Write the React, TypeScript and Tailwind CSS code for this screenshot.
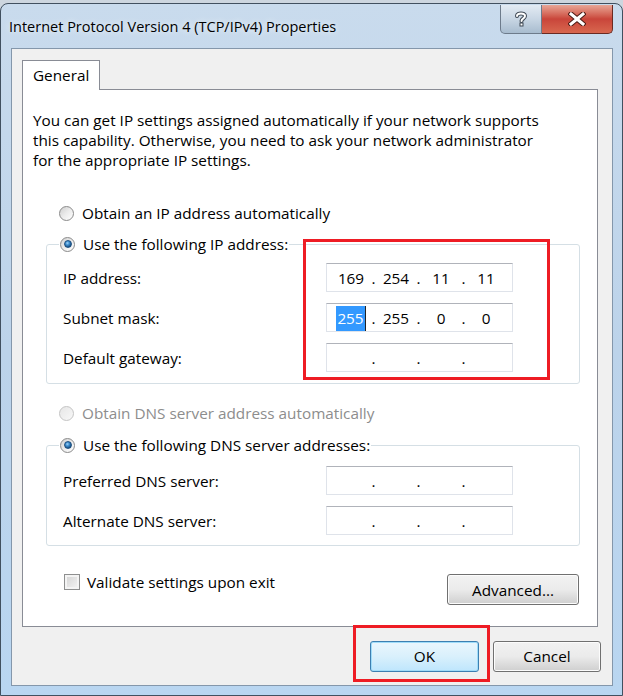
import React from "react";

function Radio({ checked, disabled }: { checked?: boolean; disabled?: boolean }) {
  return (
    <span
      className={
        "flex h-[15px] w-[15px] shrink-0 items-center justify-center rounded-full border " +
        (disabled
          ? "border-[#c4c4c4] bg-gradient-to-br from-[#e6e6e6] to-[#f8f8f8]"
          : "border-[#8a8a8a] bg-gradient-to-br from-[#cfcfcf] via-[#ececec] to-[#ffffff]")
      }
    >
      {checked && (
        <span className="h-[8px] w-[8px] rounded-full border border-[#1d4f80] bg-[radial-gradient(circle_at_40%_35%,#9fd3f7_0%,#3f8fd0_35%,#10406e_85%)]" />
      )}
    </span>
  );
}

function IpBox({ parts, selectFirst }: { parts: string[]; selectFirst?: boolean }) {
  return (
    <div className="flex h-[29px] w-[187px] items-center border border-[#dfe3ea] border-t-[#b0b3ba] bg-white pl-[6px] text-[15.3px] leading-none text-black">
      {[0, 1, 2, 3].map((i) => (
        <React.Fragment key={i}>
          {i > 0 && <span className="w-[9px] pt-[2px] text-center">.</span>}
          <span className="flex w-[36px] justify-center pt-[2px]">
            {selectFirst && i === 0 ? (
              <span className="flex items-stretch">
                <span className="bg-[#3399ff] px-[1px] py-[5px] text-white">{parts[i]}</span>
                <span className="w-[1px] bg-[#222]" />
              </span>
            ) : (
              parts[i]
            )}
          </span>
        </React.Fragment>
      ))}
    </div>
  );
}

function Row({ label, parts, selectFirst }: { label: string; parts: string[]; selectFirst?: boolean }) {
  return (
    <div className="flex items-center">
      <span className="w-[263px]">{label}</span>
      <IpBox parts={parts} selectFirst={selectFirst} />
    </div>
  );
}

function Button({ children, def, w }: { children: React.ReactNode; def?: boolean; w: string }) {
  return (
    <div
      className={
        "flex h-[31px] items-center justify-center rounded-[3px] border text-[15.3px] text-black " +
        w +
        " " +
        (def
          ? "border-[#3c7fb1] bg-gradient-to-b from-[#eaf6fd] via-[#d9f0fc] to-[#bee6fd] shadow-[inset_0_0_0_1px_#9fdcf9]"
          : "border-[#707070] bg-gradient-to-b from-[#f2f2f2] via-[#ebebeb] to-[#cfcfcf] shadow-[inset_0_0_0_1px_#fcfcfc]")
      }
    >
      {children}
    </div>
  );
}

export default function App() {
  const empty = ["", "", "", ""];
  return (
    <div className="h-[696px] w-[623px] overflow-hidden bg-[#cdd6df] font-['Open_Sans',sans-serif] text-[15.3px] text-black">
      <div className="mt-[3px] flex h-[693px] flex-col rounded-t-[8px] border border-[#41505f] bg-gradient-to-b from-[#c9dbed] via-[#bcd3ea] to-[#b9d6f1]">
        {/* title bar */}
        <div className="flex h-[44px] shrink-0 items-start justify-between">
          <div className="pl-[8px] pt-[13px] text-[14.5px] leading-[20px] text-black [text-shadow:0_0_6px_#ffffff]">
            Internet Protocol Version 4 (TCP/IPv4) Properties
          </div>
          <div className="mr-[9px] mt-[1px] flex h-[29px]">
            <div className="flex w-[42px] items-center justify-center rounded-bl-[5px] border border-t-0 border-[#6d7b8b] bg-gradient-to-b from-[#e3ebf3] via-[#c8d6e4] to-[#a8bccf]">
              <svg width="14" height="16" viewBox="0 0 14 16">
                <path
                  d="M3 5 C3 1.5 11 1.5 11 5 C11 7.5 7.5 7.5 7.5 10"
                  fill="none"
                  stroke="#3c4652"
                  strokeWidth="4"
                  strokeLinecap="round"
                />
                <path
                  d="M3 5 C3 1.5 11 1.5 11 5 C11 7.5 7.5 7.5 7.5 10"
                  fill="none"
                  stroke="#ffffff"
                  strokeWidth="2"
                  strokeLinecap="round"
                />
                <rect x="5.5" y="11.5" width="4" height="4" fill="#3c4652" />
                <rect x="6.5" y="12.5" width="2" height="2" fill="#ffffff" />
              </svg>
            </div>
            <div className="flex w-[71px] items-center justify-center rounded-br-[5px] border border-l-0 border-t-0 border-[#6a2a22] bg-gradient-to-b from-[#e7a596] via-[#c9453a] to-[#d8674f]">
              <svg width="18" height="14" viewBox="0 0 18 14">
                <path d="M3 2 L15 12 M15 2 L3 12" stroke="#4a1a14" strokeWidth="5" strokeLinecap="square" />
                <path d="M3 2 L15 12 M15 2 L3 12" stroke="#ffffff" strokeWidth="3" strokeLinecap="square" />
              </svg>
            </div>
          </div>
        </div>

        {/* client */}
        <div className="relative ml-[10px] mr-[9px] flex h-[638px] shrink-0 flex-col border border-[#8497ab] bg-[#f0f0f0]">
          {/* tab header */}
          <div className="ml-[10px] mt-[11px] flex">
            <div className="relative z-10 -mb-px flex h-[30px] w-[78px] items-center border border-b-0 border-[#898c95] bg-white pl-[10px]">
              General
            </div>
          </div>
          {/* panel */}
          <div className="relative ml-[10px] flex h-[538px] w-[576px] flex-col border border-[#898c95] bg-white leading-[20px]">
            <p className="pl-[10px] pt-[20px]">
              You can get IP settings assigned automatically if your network supports
              <br />
              this capability. Otherwise, you need to ask your network administrator
              <br />
              for the appropriate IP settings.
            </p>

            <div className="ml-[36px] mt-[33px] flex items-center gap-[8px]">
              <Radio />
              <span>Obtain an IP address automatically</span>
            </div>

            <fieldset className="ml-[23px] mr-[17px] mt-[11px] rounded-[3px] border border-[#d5dfe5] pb-[11px] pt-[9px]">
              <legend className="ml-[12px] px-[1px]">
                <span className="flex items-center gap-[8px]">
                  <Radio checked />
                  <span>Use the following IP address:</span>
                </span>
              </legend>
              <div className="flex flex-col gap-[11px] pl-[16px]">
                <Row label="IP address:" parts={["169", "254", "11", "11"]} />
                <Row label="Subnet mask:" parts={["255", "255", "0", "0"]} selectFirst />
                <Row label="Default gateway:" parts={empty} />
              </div>
            </fieldset>

            <div className="ml-[36px] mt-[19px] flex items-center gap-[8px] text-[#8d8d8d]">
              <Radio disabled />
              <span>Obtain DNS server address automatically</span>
            </div>

            <fieldset className="ml-[23px] mr-[17px] mt-[12px] rounded-[3px] border border-[#d5dfe5] pb-[10px] pt-[11px]">
              <legend className="ml-[12px] px-[1px]">
                <span className="flex items-center gap-[8px]">
                  <Radio checked />
                  <span>Use the following DNS server addresses:</span>
                </span>
              </legend>
              <div className="flex flex-col gap-[11px] pl-[16px]">
                <Row label="Preferred DNS server:" parts={empty} />
                <Row label="Alternate DNS server:" parts={empty} />
              </div>
            </fieldset>

            <div className="ml-[41px] mr-[18px] mt-[26px] flex items-start justify-between">
              <div className="flex items-center gap-[7px]">
                <span className="h-[16px] w-[16px] border border-[#8e8f8f] bg-gradient-to-br from-[#d2d2d2] to-[#f6f6f6] shadow-[inset_0_0_0_2px_#f4f4f4]" />
                <span>Validate settings upon exit</span>
              </div>
              <div className="mt-[2px]">
                <Button w="w-[132px]">Advanced...</Button>
              </div>
            </div>

            {/* red highlight around IP fields */}
            <div className="absolute left-[280px] top-[149px] h-[141px] w-[247px] border-[3px] border-[#ee1c24]" />
          </div>

          {/* bottom buttons */}
          <div className="mt-[14px] flex justify-end gap-[14px] pr-[11px]">
            <Button def w="w-[109px]">
              OK
            </Button>
            <Button w="w-[108px]">Cancel</Button>
          </div>

          {/* red highlight around OK */}
          <div className="absolute left-[341px] top-[576px] h-[57px] w-[137px] border-[3px] border-[#ee1c24]" />
        </div>
      </div>
    </div>
  );
}
